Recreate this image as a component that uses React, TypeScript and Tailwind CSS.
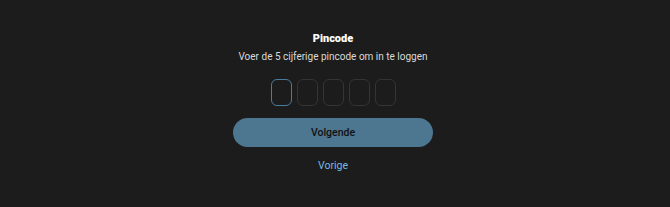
import { useState } from "react";

export default function App() {
  const [pin] = useState(["", "", "", "", ""]);

  return (
    <div className="flex h-[207px] w-full justify-center bg-[#1c1c1c] pr-[4px] font-['Roboto',sans-serif]">
      <div className="flex w-[200px] flex-col items-center pt-[31px]">
        <h1 className="text-[11px] leading-[16px] font-black text-white">Pincode</h1>
        <p className="mt-[2px] whitespace-nowrap text-[10px] leading-[16px] text-[#d9d9d9]">
          Voer de 5 cijferige pincode om in te loggen
        </p>
        <div className="mt-[14px] flex gap-[5px]">
          {pin.map((v, i) => (
            <input
              key={i}
              value={v}
              readOnly
              className={
                i === 0
                  ? "h-[27px] w-[21px] rounded-[6px] border border-[#4a7c9f] bg-transparent text-center text-white outline-none"
                  : "h-[27px] w-[21px] rounded-[6px] border border-[#343434] bg-transparent text-center text-white outline-none"
              }
            />
          ))}
        </div>
        <button className="mt-[12px] h-[29px] w-[200px] rounded-full bg-[#4d7690] text-[10.5px] font-medium text-[#121212]">
          Volgende
        </button>
        <button className="mt-[11px] text-[10.5px] text-[#74b9e3]">Vorige</button>
      </div>
    </div>
  );
}
